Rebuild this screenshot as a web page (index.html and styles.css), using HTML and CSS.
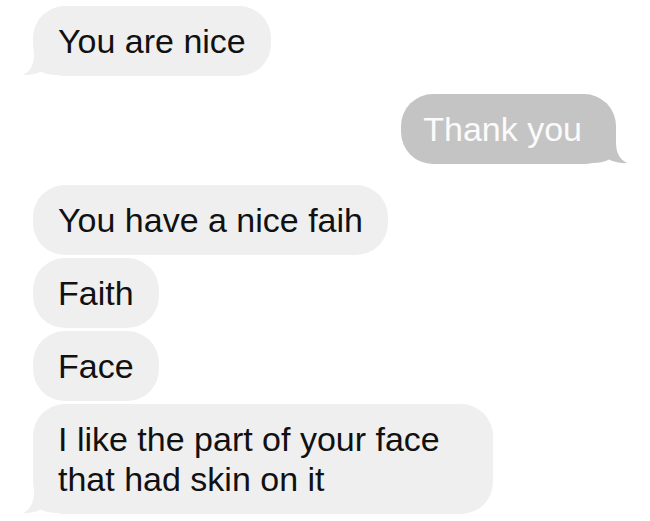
FILE: index.html
```html
<!DOCTYPE html>
<html>
<head>
<meta charset="utf-8">
<link rel="stylesheet" href="styles.css">
</head>
<body>
<div class="thread">
  <div class="bubble in tail">You are nice<svg class="tail-svg" viewBox="0 0 44 34" width="44" height="34"><path d="M11 0 L11 12 C11 22 8 29 0 33 C7 33.6 13 32.2 18 29.6 C22 31.6 27 33 34 33 L44 34 L44 0 Z"/></svg></div>
  <div class="bubble out tail">Thank you<svg class="tail-svg" viewBox="0 0 44 34" width="44" height="34"><path d="M11 0 L11 12 C11 22 8 29 0 33 C7 33.6 13 32.2 18 29.6 C22 31.6 27 33 34 33 L44 34 L44 0 Z"/></svg></div>
  <div class="bubble in group-start">You have a nice faih</div>
  <div class="bubble in">Faith</div>
  <div class="bubble in">Face</div>
  <div class="bubble in tail wide">I like the part of your face<br>that had skin on it<svg class="tail-svg" viewBox="0 0 44 34" width="44" height="34"><path d="M11 0 L11 12 C11 22 8 29 0 33 C7 33.6 13 32.2 18 29.6 C22 31.6 27 33 34 33 L44 34 L44 0 Z"/></svg></div>
</div>
</body>
</html>
```

FILE: styles.css
```css
html, body {
  margin: 0;
  padding: 0;
  background: #ffffff;
}

body {
  width: 650px;
  height: 521px;
  overflow: hidden;
  font-family: "Liberation Sans", Arial, sans-serif;
}

.thread {
  display: flex;
  flex-direction: column;
  align-items: flex-start;
  gap: 3px;
  padding: 6px 34px 0 33px;
}

.bubble {
  position: relative;
  z-index: 0;
  font-size: 34px;
  line-height: 40px;
  padding: 15px 25px;
  border-radius: 32px;
  white-space: nowrap;
}

.bubble.in {
  background: #efefef;
  color: #111111;
  fill: #efefef;
}

.bubble.out {
  align-self: flex-end;
  margin-top: 15px;
  background: #c4c4c4;
  color: #fbfbfb;
  fill: #c4c4c4;
  padding: 15px 34px 15px 22px;
}

.group-start {
  margin-top: 18px;
}

.wide {
  padding-right: 53px;
}

.tail-svg {
  position: absolute;
  z-index: -1;
  left: -10px;
  bottom: 0;
  display: block;
}

.bubble.out .tail-svg {
  left: auto;
  right: -11px;
  transform: scaleX(-1);
}
```
